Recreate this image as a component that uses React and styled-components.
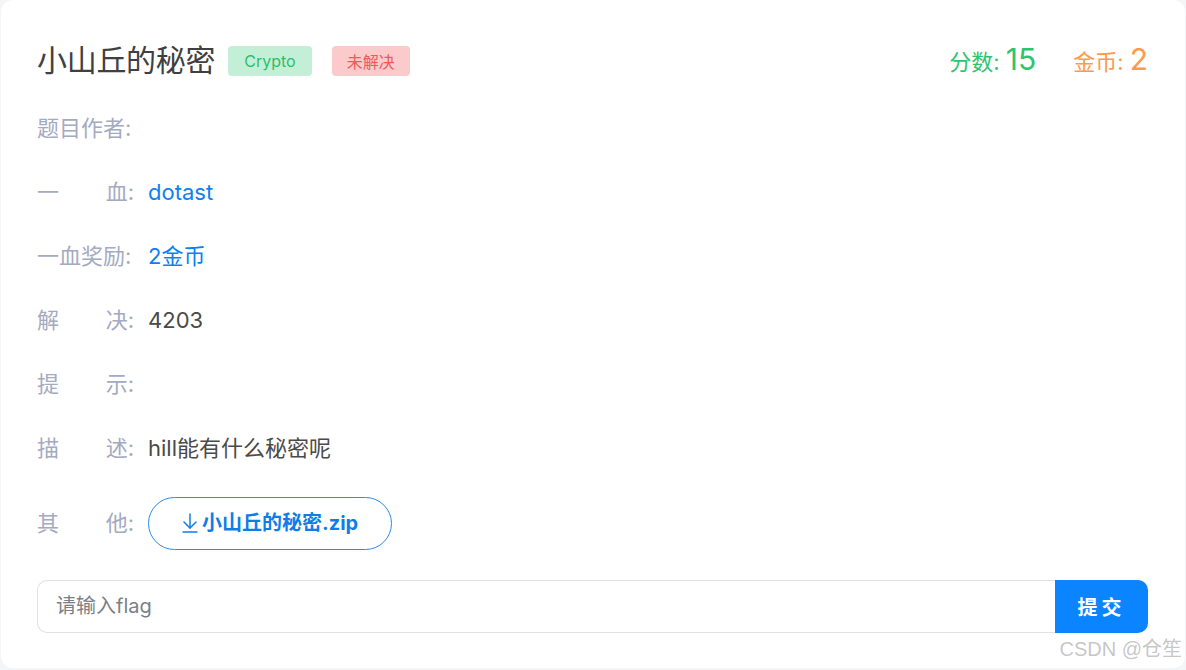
import React from 'react';
import styled, { createGlobalStyle } from 'styled-components';
import { ArrowDownToLine } from 'lucide-react';

const GlobalStyle = createGlobalStyle`
  html, body {
    margin: 0;
    padding: 0;
    background: #f4f5f7;
    font-family: Inter, "Noto Sans CJK SC", sans-serif;
  }
`;

const Card = styled.div`
  position: relative;
  box-sizing: border-box;
  width: 1184px;
  height: 668px;
  margin: 0 1px;
  background: #ffffff;
  border-radius: 12px;
  padding: 39px 37px 35px 36px;
  display: flex;
  flex-direction: column;
`;

const Header = styled.div`
  display: flex;
  align-items: center;
  justify-content: space-between;
  height: 44px;
`;

const TitleGroup = styled.div`
  display: flex;
  align-items: center;
`;

const Title = styled.h1`
  margin: -2px 13px 0 0;
  font-size: 30px;
  line-height: 44px;
  font-weight: 400;
  color: #404040;
  letter-spacing: -0.3px;
`;

const Tag = styled.span`
  display: inline-flex;
  align-items: center;
  height: 30px;
  padding: 0 ${(p) => p.$pad}px;
  margin-right: 20px;
  border-radius: 4px;
  font-size: 16px;
  background: ${(p) => p.$bg};
  color: ${(p) => p.$color};
`;

const Stats = styled.div`
  display: flex;
  align-items: baseline;
  gap: 37px;
  margin-top: -4px;
`;

const Stat = styled.span`
  color: ${(p) => p.$color};
  font-size: 22px;
  b {
    font-weight: 400;
    font-size: 30px;
  }
`;

const Rows = styled.div`
  display: flex;
  flex-direction: column;
  gap: 34px;
  margin-top: 30px;
`;

const Row = styled.div`
  display: flex;
  align-items: center;
  min-height: 30px;
`;

const Label = styled.div`
  width: 97px;
  flex: none;
  display: flex;
  justify-content: space-between;
  margin-right: 14px;
  font-size: 22px;
  line-height: 30px;
  color: #a4aac0;
`;

const Value = styled.div`
  font-size: 22px;
  line-height: 30px;
  color: ${(p) => (p.$link ? '#0f80f2' : '#4a4a4a')};
`;

const DownloadButton = styled.button`
  display: inline-flex;
  align-items: center;
  height: 53px;
  padding: 0 33px 0 29px;
  border: 1px solid #2a8bf0;
  border-radius: 27px;
  background: #fff;
  color: #0f7de8;
  font-family: Inter, "Noto Sans CJK SC", sans-serif;
  font-size: 20px;
  line-height: 30px;
  font-weight: 700;
  cursor: pointer;
`;

const FlagForm = styled.div`
  display: flex;
  height: 54px;
  margin-top: 30px;
`;

const FlagInput = styled.input`
  flex: 1;
  box-sizing: border-box;
  border: 1px solid #dfe1e6;
  border-right: none;
  border-radius: 10px 0 0 10px;
  padding: 0 18px;
  font-family: Inter, "Noto Sans CJK SC", sans-serif;
  font-size: 20px;
  color: #444;
  outline: none;
  &::placeholder {
    color: #7b7f86;
  }
`;

const SubmitButton = styled.button`
  width: 93px;
  border: none;
  border-radius: 0 10px 10px 0;
  background: #0a84ff;
  color: #fff;
  font-family: "Noto Sans CJK SC", sans-serif;
  font-size: 20px;
  font-weight: 700;
  letter-spacing: 4px;
  padding-left: 6px;
  cursor: pointer;
`;

const Watermark = styled.div`
  position: absolute;
  right: 3px;
  bottom: 6px;
  font-family: "Liberation Sans", "Noto Sans CJK SC", sans-serif;
  font-size: 20px;
  color: rgba(150, 150, 150, 0.55);
  pointer-events: none;
`;

const SpacedLabel = ({ chars }) => (
  <Label>
    {chars.map((c, i) => (
      <span key={i}>{c}</span>
    ))}
  </Label>
);

const rows = [
  { label: ['题目作者:'], value: '' },
  { label: ['一', '血:'], value: 'dotast', link: true },
  { label: ['一血奖励:'], value: '2金币', link: true },
  { label: ['解', '决:'], value: '4203' },
  { label: ['提', '示:'], value: '' },
  { label: ['描', '述:'], value: 'hill能有什么秘密呢' },
];

const App = () => {
  return (
    <>
      <GlobalStyle />
      <Card>
        <Header>
          <TitleGroup>
            <Title>小山丘的秘密</Title>
            <Tag $bg="#c3efd7" $color="#2bbf6c" $pad={16}>Crypto</Tag>
            <Tag $bg="#fbcacb" $color="#f0585c" $pad={15}>未解决</Tag>
          </TitleGroup>
          <Stats>
            <Stat $color="#2ec46e">分数: <b>15</b></Stat>
            <Stat $color="#ff9a48">金币: <b>2</b></Stat>
          </Stats>
        </Header>
        <Rows>
          {rows.map((row, i) => (
            <Row key={i}>
              <SpacedLabel chars={row.label} />
              <Value $link={row.link}>{row.value}</Value>
            </Row>
          ))}
          <Row>
            <SpacedLabel chars={['其', '他:']} />
            <DownloadButton>
              <ArrowDownToLine size={24} strokeWidth={1.5} />
              小山丘的秘密.zip
            </DownloadButton>
          </Row>
        </Rows>
        <FlagForm>
          <FlagInput placeholder="请输入flag" />
          <SubmitButton>提交</SubmitButton>
        </FlagForm>
        <Watermark>CSDN @仓笙</Watermark>
      </Card>
    </>
  );
};

export default App;
